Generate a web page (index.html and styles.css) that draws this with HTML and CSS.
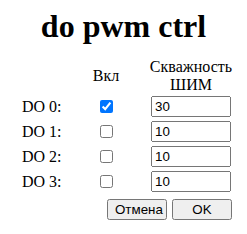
FILE: index.html
```html
<!DOCTYPE html>
<html lang="ru">
<head>
  <meta charset="UTF-8">
  <title>do pwm ctrl</title>
  <link rel="stylesheet" href="styles.css">
</head>
<body>
  <form class="dialog">
    <h1>do pwm ctrl</h1>
    <table class="ctrl">
      <tr>
        <th class="col-name"></th>
        <th class="col-on">Вкл</th>
        <th class="col-duty">Скважность ШИМ</th>
      </tr>
      <tr>
        <td>DO 0:</td>
        <td class="col-on"><input type="checkbox" checked></td>
        <td class="col-duty"><input type="text" class="duty" value="30"></td>
      </tr>
      <tr>
        <td>DO 1:</td>
        <td class="col-on"><input type="checkbox"></td>
        <td class="col-duty"><input type="text" class="duty" value="10"></td>
      </tr>
      <tr>
        <td>DO 2:</td>
        <td class="col-on"><input type="checkbox"></td>
        <td class="col-duty"><input type="text" class="duty" value="10"></td>
      </tr>
      <tr>
        <td>DO 3:</td>
        <td class="col-on"><input type="checkbox"></td>
        <td class="col-duty"><input type="text" class="duty" value="10"></td>
      </tr>
      <tr>
        <td colspan="3">
          <div class="buttons">
            <button type="button" class="btn">Отмена</button>
            <button type="button" class="btn">OK</button>
          </div>
        </td>
      </tr>
    </table>
  </form>
</body>
</html>
```

FILE: styles.css
```css
body {
  margin: 0;
  font-family: 'Liberation Serif', serif;
  background-color: #fff;
  color: #000;
}
.dialog {
  width: 247px;
}
h1 {
  margin: 8px 0 13px;
  font-size: 32px;
  text-align: center;
}
.ctrl {
  margin-left: 22px;
  border-spacing: 0;
  table-layout: fixed;
  width: 211px;
}
.ctrl th {
  font-weight: normal;
  padding: 0;
}
.ctrl td {
  padding: 2px 0;
  height: 21px;
}
.col-name {
  width: 41px;
}
.col-on {
  width: 86px;
  text-align: center;
}
.col-duty {
  width: 84px;
  text-align: center;
}
.duty {
  width: 72px;
  margin: 0;
  font-family: 'Liberation Sans', sans-serif;
}
.buttons {
  display: flex;
  justify-content: flex-end;
  gap: 5px;
  padding-top: 3px;
  margin-right: 1px;
}
.btn {
  width: 60px;
  font-family: 'Liberation Sans', sans-serif;
}
```
